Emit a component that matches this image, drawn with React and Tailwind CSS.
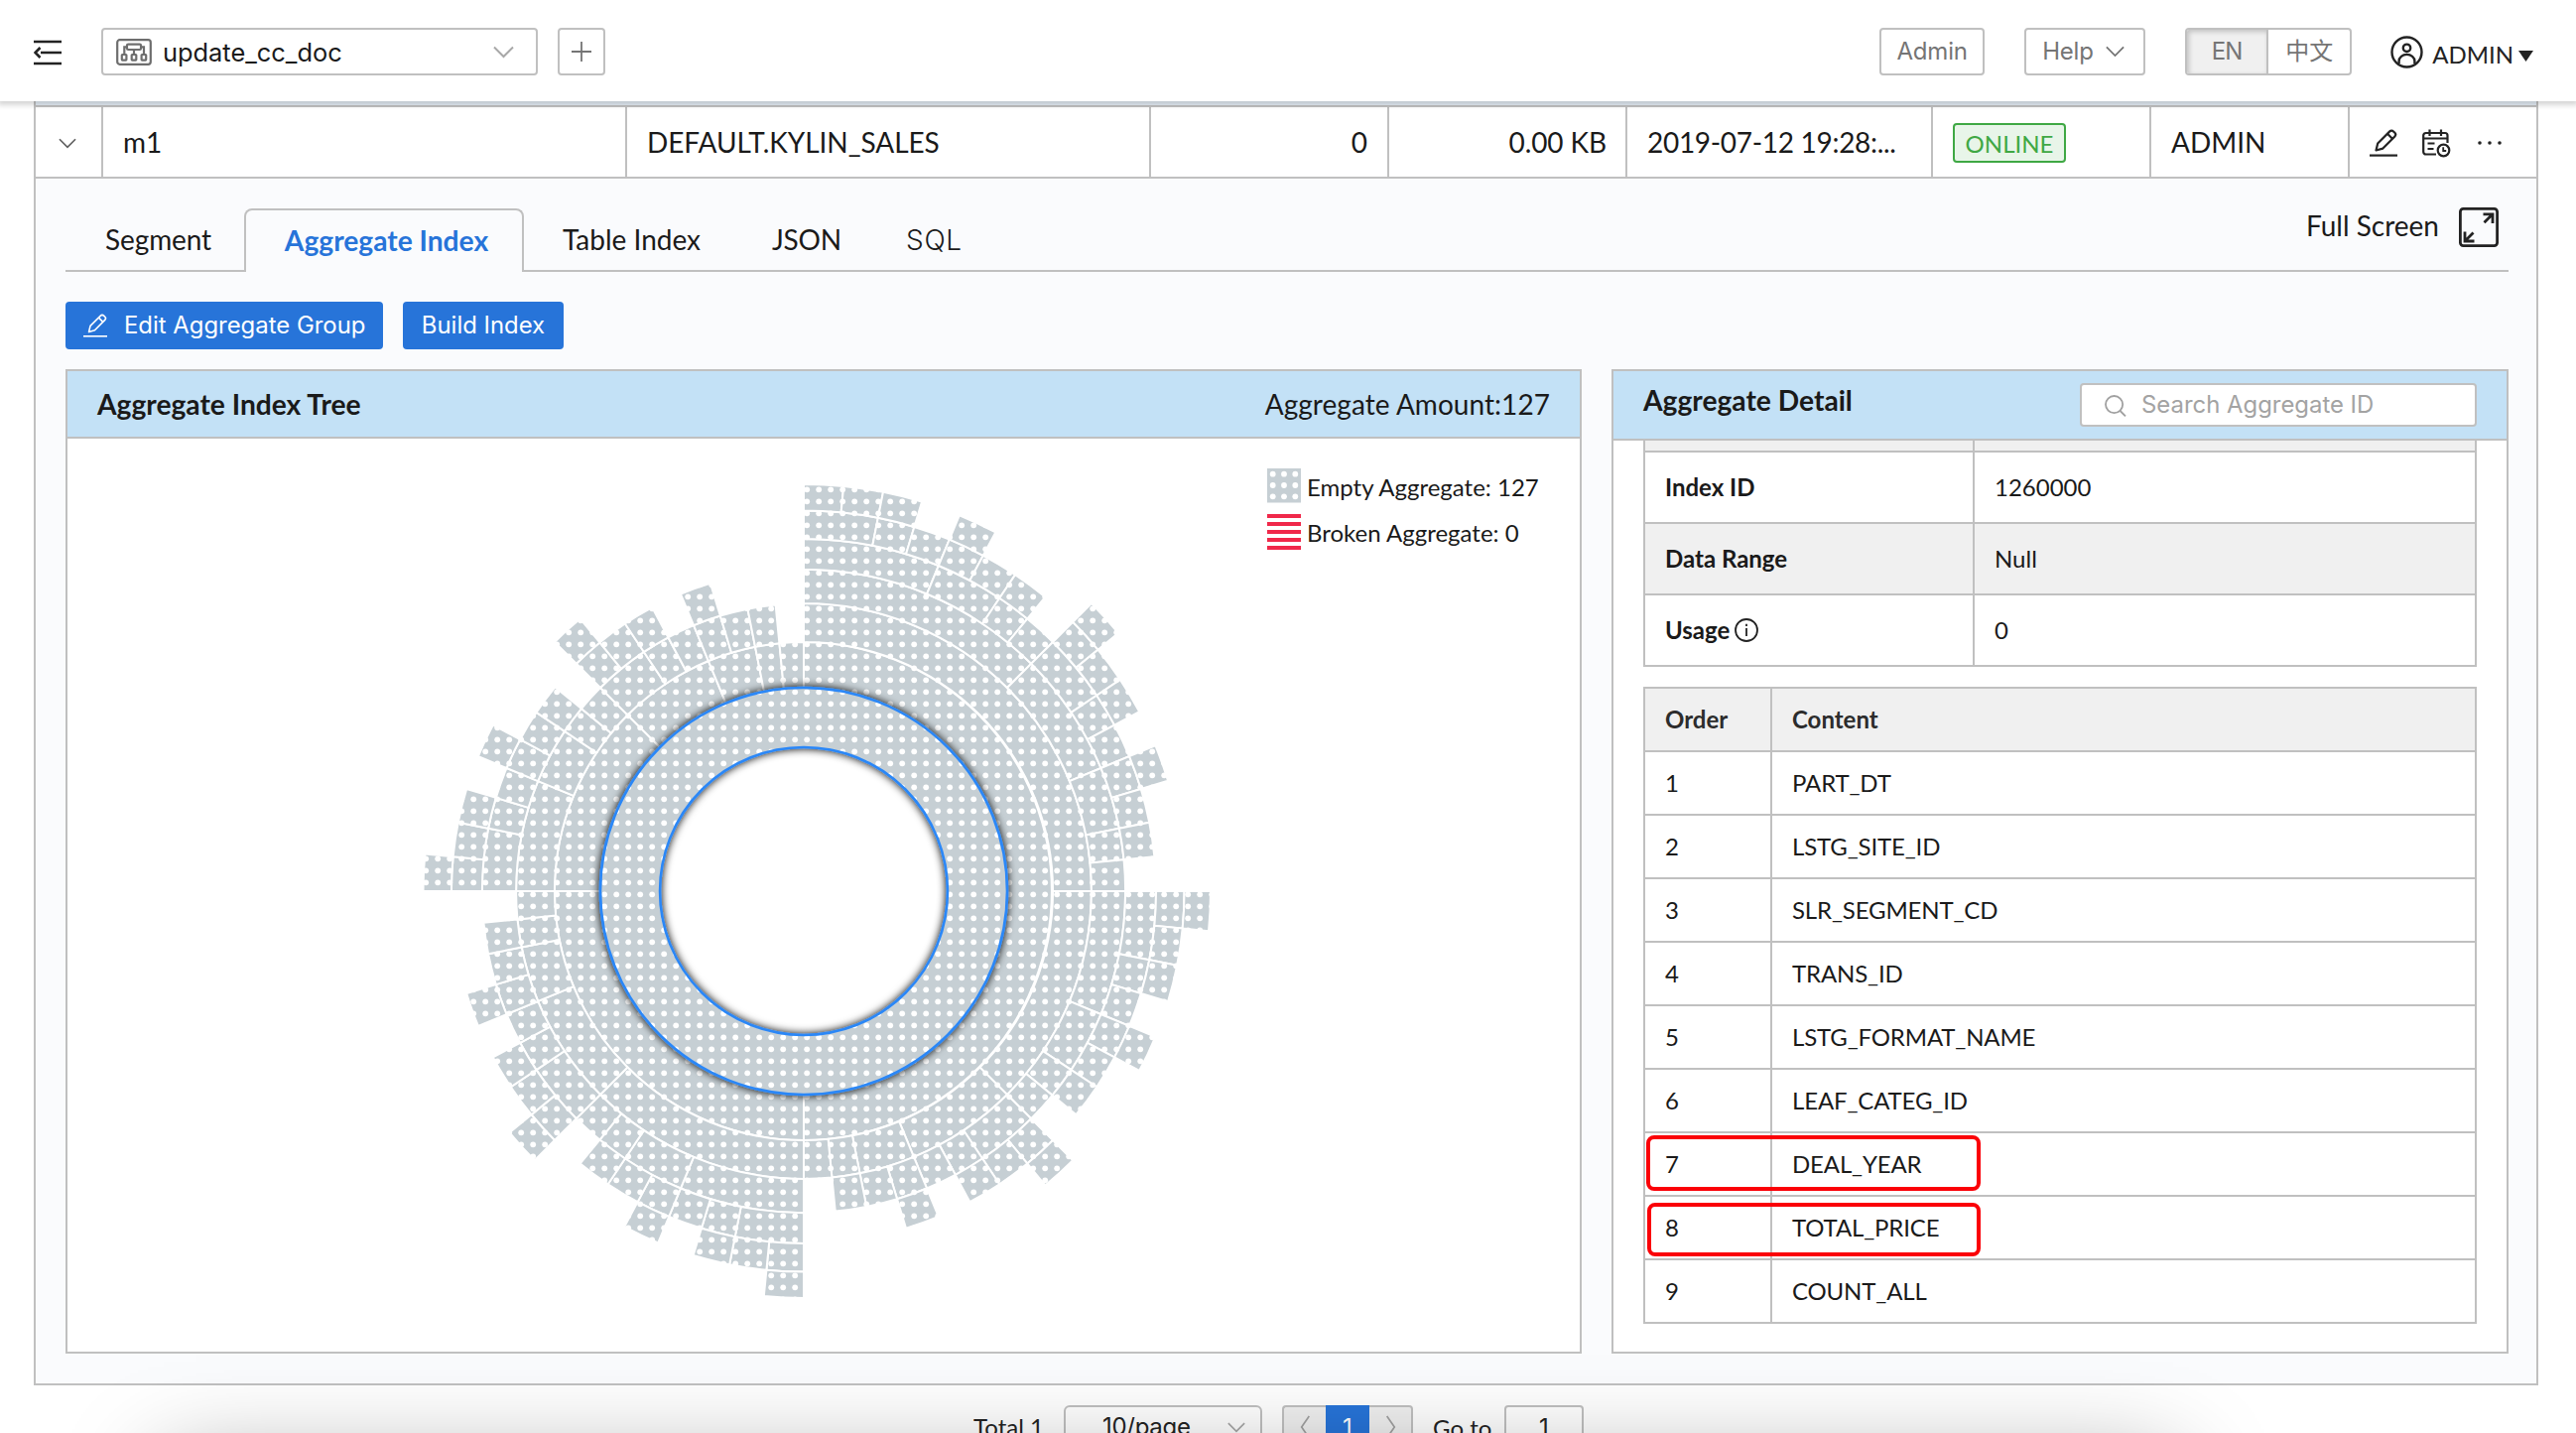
const SANS = "font-['Inter','Noto_Sans_CJK_SC',sans-serif]";

/* ---------- icons ---------- */

function Chevron({ className, dir = "down", width = 2 }) {
  const d = { down: "M1 1.5 L10.5 11 L20 1.5", left: "M11 1 L2 14 L11 27", right: "M2 1 L11 14 L2 27" }[dir];
  return (
    <svg className={className} viewBox={dir === "down" ? "0 0 21 13" : "0 0 13 28"} fill="none" stroke="currentColor" strokeWidth={width}>
      <path d={d} />
    </svg>
  );
}

function CollapseIcon() {
  return (
    <svg className="h-[28px] w-[28px]" viewBox="0 0 28 28" fill="none" stroke="#232323" strokeWidth="2.6">
      <path d="M0 3h28M7 14h21M0 25h28" />
      <path d="M6.5 9 L1.5 14 L6.5 19" />
    </svg>
  );
}

function ProjectIcon() {
  return (
    <svg className="h-[27px] w-[36px]" viewBox="0 0 36 27" fill="none" stroke="#6e6e6e" strokeWidth="2.2">
      <rect x="1.2" y="1.2" width="33.6" height="24.6" rx="2.5" />
      <rect x="11" y="5.6" width="14" height="5.4" rx="1.2" />
      <path d="M11 8.3H8.3V16M25 8.3h3V16M18 11v5" />
      <rect x="5.8" y="16" width="4.6" height="5.6" rx="0.6" />
      <rect x="15.7" y="16" width="4.6" height="5.6" rx="0.6" />
      <rect x="25.6" y="16" width="4.6" height="5.6" rx="0.6" />
    </svg>
  );
}

function PencilIcon({ className, width = 2.2 }) {
  return (
    <svg className={className} viewBox="0 0 28 28" fill="none" stroke="currentColor" strokeWidth={width} strokeLinejoin="round">
      <path d="M0 26.6h28" />
      <path d="M6.5 21.5 L8.2 14.5 L20.3 2.4 A2.6 2.6 0 0 1 24 2.4 L25.4 3.8 A2.6 2.6 0 0 1 25.4 7.4 L13.4 19.6 Z" />
      <path d="M18 4.8 L23 9.8" />
    </svg>
  );
}

function CalendarClockIcon() {
  return (
    <svg className="h-[29px] w-[29px]" viewBox="0 0 29 29" fill="none" stroke="#232323" strokeWidth="2.2">
      <path d="M14 25.5H4A2.5 2.5 0 0 1 1.2 23V6.5A2.5 2.5 0 0 1 4 4H23a2.5 2.5 0 0 1 2.5 2.5V14" />
      <path d="M7.5 0.5v6.5M19 0.5v6.5M1.5 9.5h24M5.5 14.5h7M5.5 20h6" />
      <circle cx="21.5" cy="21.5" r="5.8" />
      <path d="M21.2 18.2v3.8h3" strokeWidth="1.8" />
    </svg>
  );
}

function UserIcon() {
  return (
    <svg className="h-[33px] w-[33px]" viewBox="0 0 33 33" fill="none" stroke="#232323" strokeWidth="2.4">
      <circle cx="16.5" cy="16.5" r="15" />
      <circle cx="16.5" cy="12.3" r="3.7" />
      <path d="M8.6 28 V25.5 A7.9 6.6 0 0 1 24.4 25.5 V28" />
    </svg>
  );
}

function FullScreenIcon() {
  return (
    <svg className="h-[40px] w-[40px]" viewBox="0 0 40 40" fill="none" stroke="#232323" strokeWidth="2.8">
      <rect x="1.4" y="1.4" width="37.2" height="37.2" rx="3" />
      <path d="M24.5 6.8H34V16M34 6.8L25.5 15.3M15.5 34H6V24.5M6 34L14.5 25.5" />
    </svg>
  );
}

function SearchIcon() {
  return (
    <svg className="h-[22px] w-[22px]" viewBox="0 0 22 22" fill="none" stroke="#a0a0a0" strokeWidth="1.8">
      <circle cx="9.6" cy="9.6" r="8.6" />
      <path d="M15.6 16 L21 21.4" />
    </svg>
  );
}

function InfoIcon() {
  return (
    <svg className="h-[24px] w-[24px]" viewBox="0 0 24 24" fill="none" stroke="#232323" strokeWidth="1.8">
      <circle cx="12" cy="12" r="11" />
      <path d="M12 10v8M12 5.8v2.2" />
    </svg>
  );
}

/* ---------- aggregate sunburst ---------- */

const OUTER = 410;
const radius = (depth) => OUTER * Math.sqrt(depth / 8);

// Each aggregate of order k owns sub-aggregates of order k-1 ... 0.
// The very last descendant of the first branch stands for the empty set and is left out.
function collectArcs(order, depth, start, sweep, out) {
  if (depth > 7) return;
  out.push({ depth, start, sweep });
  let angle = start;
  for (let k = order - 1; k >= 0; k--) {
    const part = k === 0 ? sweep / 2 ** (order - 1) : sweep / 2 ** (order - k);
    collectArcs(k, depth + 1, angle, part, out);
    angle += part;
  }
}

function point(r, deg) {
  const a = (deg * Math.PI) / 180;
  return `${(r * Math.sin(a)).toFixed(2)} ${(-r * Math.cos(a)).toFixed(2)}`;
}

function arcPath({ depth, start, sweep }) {
  const r0 = radius(depth);
  const r1 = radius(depth + 1);
  const end = start + sweep;
  const large = sweep > 180 ? 1 : 0;
  return `M${point(r1, start)}A${r1} ${r1} 0 ${large} 1 ${point(r1, end)}L${point(r0, end)}A${r0} ${r0} 0 ${large} 0 ${point(r0, start)}Z`;
}

const arcs = [];
collectArcs(7, 1, 0, 360, arcs);
const ring = (r) => `M0 ${-r}A${r} ${r} 0 1 1 0 ${r}A${r} ${r} 0 1 1 0 ${-r}Z`;

function Sunburst() {
  return (
    <svg className="block h-[920px] w-[1524px]" viewBox="0 0 1524 920">
      <defs>
        <pattern id="dots" width="12" height="12" patternUnits="userSpaceOnUse">
          <rect width="12" height="12" fill="#c6cfd4" />
          <circle cx="3.2" cy="3.3" r="2.9" fill="#fff" />
        </pattern>
        <filter id="glow" x="-20%" y="-20%" width="140%" height="140%">
          <feDropShadow dx="0" dy="0" stdDeviation="4" floodColor="#000" floodOpacity="1" />
        </filter>
      </defs>
      <g transform="translate(742 456)">
        {arcs.slice(1).map((a, i) => (
          <path key={i} d={arcPath(a)} fill="url(#dots)" stroke="#fff" strokeWidth="2" />
        ))}
        <path d={ring(radius(2)) + ring(radius(1))} fillRule="evenodd" fill="url(#dots)" stroke="#2b87f7" strokeWidth="2.6" filter="url(#glow)" />
      </g>
      <g transform="translate(1209 30)">
        <rect width="34" height="34.5" fill="#c6cfd4" />
        {[5.7, 17, 28.3].map((y) => [5.7, 17, 28.3].map((x) => <circle key={`${x}-${y}`} cx={x} cy={y} r="2.9" fill="#fff" />))}
        {[46, 54, 62, 70, 78].map((y) => (
          <rect key={y} y={y} width="34" height="4" fill="#f0284a" />
        ))}
        <text x="40" y="28" fontSize="24" fill="#1a1a1a" className="font-['Lato',sans-serif]">Empty Aggregate: 127</text>
        <text x="40" y="74" fontSize="24" fill="#1a1a1a" className="font-['Lato',sans-serif]">Broken Aggregate: 0</text>
      </g>
    </svg>
  );
}

/* ---------- page sections ---------- */

function Header() {
  return (
    <header className={`relative z-10 flex h-[102px] shrink-0 items-start bg-white pt-[28px] text-[24px] text-[#757575] shadow-[0_2px_5px_2px_rgba(0,0,0,0.16)] ${SANS}`}>
      <div className="ml-[34px] mt-[11px]"><CollapseIcon /></div>
      <div className="ml-[40px] flex h-[48px] w-[440px] items-center rounded-[4px] border-2 border-[#c0c0c0] pl-[13px] pr-[22px]">
        <ProjectIcon />
        <span className="ml-[11px] mt-[2px] text-[25.4px] leading-none text-[#1a1a1a]">update_cc_doc</span>
        <Chevron className="ml-auto h-[13px] w-[21px] text-[#a8a8a8]" />
      </div>
      <div className="ml-[20px] flex h-[48px] w-[48px] items-center justify-center rounded-[4px] border-2 border-[#c0c0c0]">
        <svg className="h-[20px] w-[20px]" viewBox="0 0 20 20" stroke="#757575" strokeWidth="1.8"><path d="M0 10h20M10 0v20" /></svg>
      </div>
      <div className="ml-auto mr-[43px] flex">
        <div className="flex h-[48px] w-[106px] items-center justify-center rounded-[4px] border-2 border-[#c0c0c0] tracking-[-0.2px]">Admin</div>
        <div className="ml-[40px] flex h-[48px] w-[122px] items-center rounded-[4px] border-2 border-[#c0c0c0] pl-[16px]">
          <span className="tracking-[-0.2px]">Help</span>
          <Chevron className="ml-[12px] h-[12px] w-[19px]" />
        </div>
        <div className="ml-[40px] flex h-[48px] w-[168px] overflow-hidden rounded-[4px] border-2 border-[#c0c0c0]">
          <div className="flex w-[82px] items-center justify-center border-r-2 border-[#c0c0c0] bg-[#f0f0f0] tracking-[-0.8px] shadow-[inset_2px_2px_5px_rgba(0,0,0,0.2)]">EN</div>
          <div className="flex flex-1 items-center justify-center">中文</div>
        </div>
        <div className="ml-[39px] flex h-[48px] items-center font-['Lato',sans-serif] text-[#232323]">
          <UserIcon />
          <span className="ml-[9px] mt-[6px] leading-none">ADMIN</span>
          <svg className="ml-[5px] mt-[8px] h-[11px] w-[15px]" viewBox="0 0 15 11"><path d="M0 0h15L7.5 11z" fill="#232323" /></svg>
        </div>
      </div>
    </header>
  );
}

function ModelRow() {
  const cell = "flex shrink-0 items-center border-r-2 border-[#c0c0c0]";
  return (
    <div className="flex h-[72px] border-b-2 border-[#c0c0c0] bg-white">
      <div className={`${cell} w-[68px] justify-center pr-[2px] pt-[2px]`}><Chevron className="h-[11px] w-[18px] text-[#606060]" /></div>
      <div className={`${cell} w-[528px] pl-[20px] pt-[2px]`}>m1</div>
      <div className={`${cell} w-[528px] pl-[20px] pt-[2px] tracking-[-0.05px]`}>DEFAULT.KYLIN_SALES</div>
      <div className={`${cell} w-[240px] justify-end pr-[20px] pt-[2px]`}>0</div>
      <div className={`${cell} w-[240px] justify-end pr-[19px] pt-[2px] tracking-[-0.1px]`}>0.00 KB</div>
      <div className={`${cell} w-[308px] whitespace-nowrap pl-[20px] pt-[2px] tracking-[-0.3px]`}>2019-07-12 19:28:...</div>
      <div className={`${cell} w-[220px] pl-[20px] pt-[2px]`}>
        <span className="flex h-[40px] w-[114px] items-center justify-center rounded-[4px] border-2 border-[#3fa844] bg-[#e8f5e9] pt-[2px] text-[24px] text-[#3fa844]">ONLINE</span>
      </div>
      <div className={`${cell} w-[200px] pl-[20px] pt-[2px]`}>ADMIN</div>
      <div className="flex items-center pl-[20px] pt-[2px]">
        <PencilIcon className="h-[28px] w-[28px] text-[#232323]" />
        <span className="ml-[25px]"><CalendarClockIcon /></span>
        <svg className="ml-[27px] h-[4px] w-[24px]" viewBox="0 0 24 4" fill="#232323"><circle cx="2" cy="2" r="1.8" /><circle cx="12" cy="2" r="1.8" /><circle cx="22" cy="2" r="1.8" /></svg>
      </div>
    </div>
  );
}

function Tabs() {
  return (
    <div className="flex h-[64px] items-stretch border-b-2 border-[#c0c0c0]">
      <span className="flex w-[180px] items-center pl-[40px] pt-[2px] tracking-[-0.1px]">Segment</span>
      <span className="-mb-[2px] flex w-[282px] items-center justify-center rounded-t-[8px] border-2 border-b-0 border-[#c0c0c0] bg-[#fafbfd] pb-[1px] pl-[5px] text-[28.2px] font-bold text-[#2774d9]">Aggregate Index</span>
      <span className="ml-[39px] flex items-center pt-[2px]">Table Index</span>
      <span className="ml-[72px] flex items-center pt-[2px] tracking-[-0.2px]">JSON</span>
      <span className={`ml-[65px] flex items-center pt-[4px] font-light tracking-[0.7px] ${SANS}`}>SQL</span>
      <span className="ml-auto flex h-[36px] items-center gap-[20px] pr-[10px]">
        Full Screen
        <span className="mt-[2px]"><FullScreenIcon /></span>
      </span>
    </div>
  );
}

function TreePanel() {
  return (
    <section className="h-[992px] w-[1528px] border-2 border-[#c0c0c0] bg-white">
      <div className="flex h-[68px] items-center justify-between border-b-2 border-[#c0c0c0] bg-[#c3e1f6] px-[30px] pt-[2px]">
        <span className="text-[28.2px] font-bold">Aggregate Index Tree</span>
        <span className="tracking-[0.05px]">Aggregate Amount:127</span>
      </div>
      <Sunburst />
    </section>
  );
}

const facts = [
  ["Index ID", "1260000", "bg-white"],
  ["Data Range", "Null", "bg-[#f0f0f0]"],
  ["Usage", "0", "bg-white"],
];

const columns = ["PART_DT", "LSTG_SITE_ID", "SLR_SEGMENT_CD", "TRANS_ID", "LSTG_FORMAT_NAME", "LEAF_CATEG_ID", "DEAL_YEAR", "TOTAL_PRICE", "COUNT_ALL"];

const marks = {
  DEAL_YEAR: "absolute left-[1px] top-[2px] h-[56px] w-[337px] rounded-[8px] border-4 border-[#fb0007]",
  TOTAL_PRICE: "absolute left-[2px] top-[6px] h-[54px] w-[336px] rounded-[8px] border-4 border-[#fb0007]",
};

function DetailPanel() {
  return (
    <section className="h-[992px] w-[904px] border-2 border-[#c0c0c0] bg-white">
      <div className="flex h-[70px] items-center justify-between border-b-2 border-[#c0c0c0] bg-[#c3e1f6] px-[30px]">
        <span className="-mt-[9px] text-[28.2px] font-bold">Aggregate Detail</span>
        <div className={`flex h-[44px] w-[400px] items-center rounded-[4px] border-2 border-[#c0c0c0] bg-white pl-[23px] text-[23.9px] text-[#a3a3a3] ${SANS}`}>
          <span className="mt-[2px]"><SearchIcon /></span>
          <span className="ml-[15px]">Search Aggregate ID</span>
        </div>
      </div>
      <div className="px-[30px] text-[24px]">
        <div className="border-x-2 border-[#c0c0c0]">
          <div className="flex h-[12px] border-b-2 border-[#c0c0c0] bg-[#f0f0f0]"><div className="w-[332px] border-r-2 border-[#c0c0c0]" /></div>
          {facts.map(([label, value, bg]) => (
            <div key={label} className={`flex h-[72px] border-b-2 border-[#c0c0c0] ${bg}`}>
              <div className="flex w-[332px] items-center border-r-2 border-[#c0c0c0] pl-[20px] font-bold">
                {label}
                {label === "Usage" && <span className="ml-[5px]"><InfoIcon /></span>}
              </div>
              <div className="flex items-center pl-[20px]">{value}</div>
            </div>
          ))}
        </div>
        <div className="mt-[20px] border-2 border-b-0 border-[#c0c0c0]">
          <div className="flex h-[64px] border-b-2 border-[#c0c0c0] bg-[#f0f0f0] font-bold text-[#2c2c2c]">
            <div className="flex w-[128px] items-center border-r-2 border-[#c0c0c0] pl-[20px]">Order</div>
            <div className="flex items-center pl-[20px]">Content</div>
          </div>
          {columns.map((name, i) => (
            <div key={name} className="relative flex h-[64px] border-b-2 border-[#c0c0c0]">
              <div className="flex w-[128px] items-center border-r-2 border-[#c0c0c0] pl-[20px]">{i + 1}</div>
              <div className="flex items-center pl-[20px] tracking-[-0.15px]">{name}</div>
              {marks[name] && <div className={marks[name]} />}
            </div>
          ))}
        </div>
      </div>
    </section>
  );
}

function Pagination() {
  return (
    <div className="mt-[20px] flex h-[44px] items-center pl-[981px] text-[24px] text-[#232323]">
      <span className="w-[91px]">Total 1</span>
      <div className={`flex h-[44px] w-[200px] items-center justify-between rounded-[6px] border-2 border-[#c0c0c0] bg-white pl-[37px] pr-[15px] ${SANS}`}>
        <span className="tracking-[-0.3px]">10/page</span>
        <Chevron className="h-[13px] w-[18px] text-[#a8a8a8]" />
      </div>
      <div className="ml-[20px] flex h-[44px] w-[132px] items-stretch">
        <div className="flex w-[44px] items-center justify-center rounded-l-[4px] border-2 border-r-0 border-[#c0c0c0] bg-[#f0f0f0] text-[#a0a0a0]"><Chevron dir="left" className="h-[24px] w-[11px]" /></div>
        <div className={`flex w-[44px] items-center justify-center bg-[#2774d9] pt-[3px] text-white ${SANS}`}>1</div>
        <div className="flex w-[44px] items-center justify-center rounded-r-[4px] border-2 border-l-0 border-[#c0c0c0] bg-[#f0f0f0] text-[#a0a0a0]"><Chevron dir="right" className="h-[24px] w-[11px]" /></div>
      </div>
      <span className="ml-[20px] mt-[3px] w-[72px]">Go to</span>
      <div className={`flex h-[44px] w-[80px] items-center justify-center rounded-[4px] border-2 border-[#c0c0c0] bg-white pt-[3px] ${SANS}`}>1</div>
    </div>
  );
}

export default function App() {
  return (
    <div className="relative flex h-[1444px] w-[2596px] flex-col overflow-hidden bg-white font-['Lato','Noto_Sans_CJK_SC',sans-serif] text-[28px] leading-[1.2] text-[#1a1a1a]">
      <Header />
      <main className="ml-[34px] h-[1294px] w-[2524px] shrink-0 border-x-2 border-b-2 border-[#c0c0c0] bg-[#fafbfd]">
        <div className="h-[6px] border-b-2 border-[#c0c0c0] bg-[#e6eff7]" />
        <ModelRow />
        <div className="pl-[30px] pr-[28px] pt-[30px]">
          <Tabs />
          <div className={`mt-[30px] flex gap-[20px] text-[23.9px] text-white ${SANS}`}>
            <div className="flex h-[48px] w-[320px] items-center rounded-[4px] bg-[#2774d9] pl-[18px]">
              <PencilIcon className="h-[24px] w-[24px]" width={1.9} />
              <span className="ml-[17px]">Edit Aggregate Group</span>
            </div>
            <div className="flex h-[48px] w-[162px] items-center justify-center rounded-[4px] bg-[#2774d9]">Build Index</div>
          </div>
          <div className="mt-[20px] flex justify-between">
            <TreePanel />
            <DetailPanel />
          </div>
        </div>
      </main>
      <Pagination />
      <div className="pointer-events-none absolute left-[165px] top-[1479px] h-[400px] w-[2025px] shadow-[0_0_94px_rgba(0,0,0,0.4)]" />
    </div>
  );
}
